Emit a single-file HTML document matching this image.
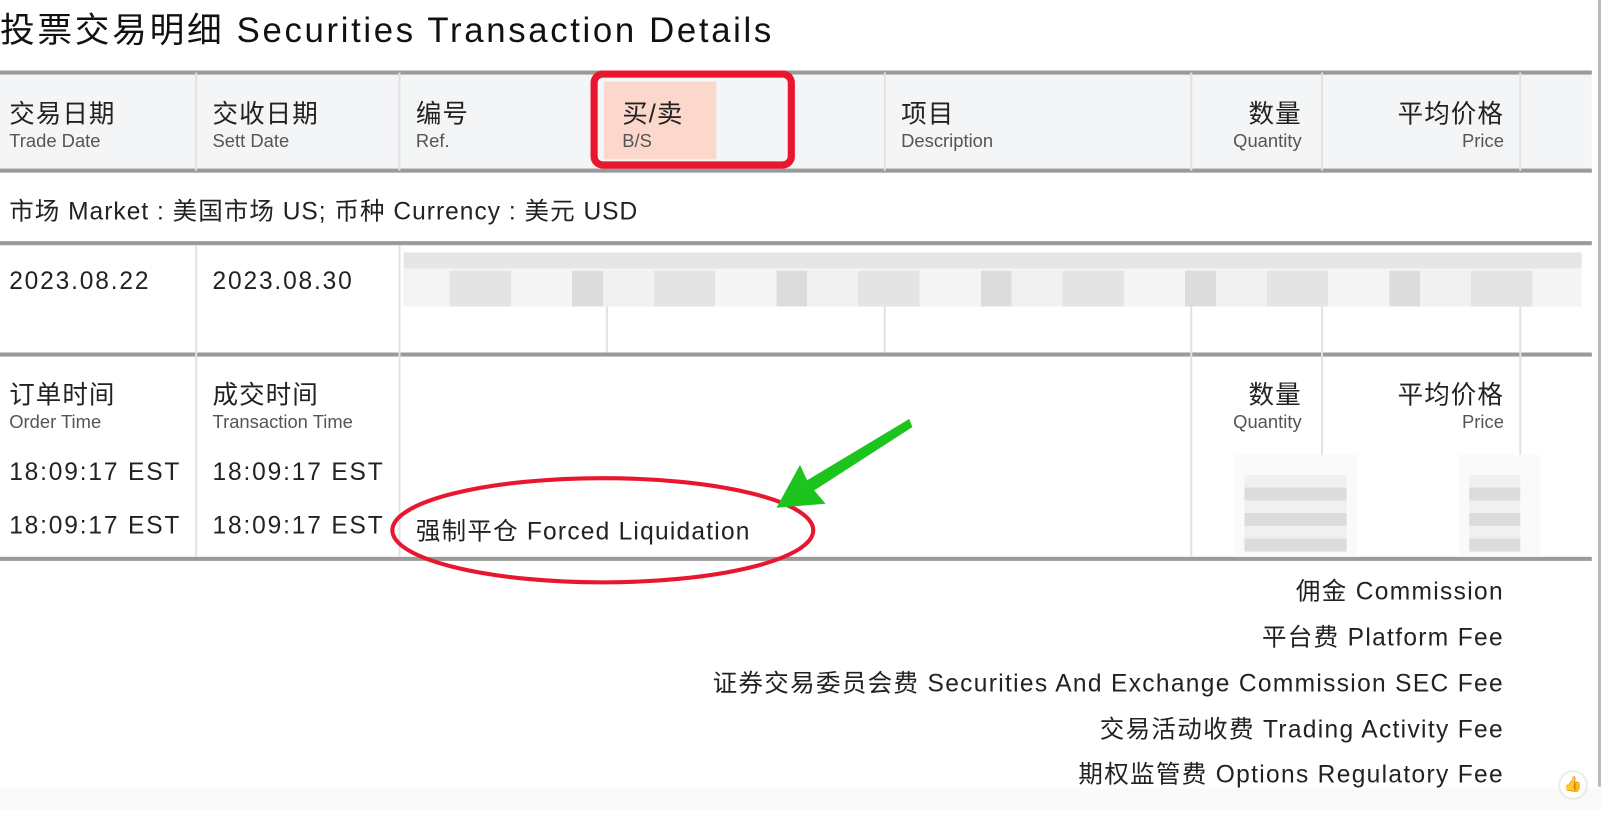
<!DOCTYPE html>
<html><head><meta charset="utf-8"><style>
body{margin:0;width:1602px;height:810px;background:#fff;position:relative;overflow:hidden;font-family:"Liberation Sans","Noto Sans CJK SC",sans-serif;color:#333}
#w{position:absolute;left:0;top:0;width:1568px;height:793px;transform:scale(1.0217);transform-origin:0 0}
.a{position:absolute;white-space:nowrap}
.h{position:absolute;height:4px;background:#9a9a9a}
.v{position:absolute;width:2px;background:#e2e2e2}
.cn{font-size:25px;color:#222;letter-spacing:1px}
.en{font-size:18px;color:#555}
.d{font-size:24px;color:#222;letter-spacing:1.8px}
.f{font-size:24px;color:#222;right:96px;text-align:right;letter-spacing:1.3px}
</style></head><body>
<div id="w">
<div class="a" style="left:0;top:2px;font-size:34px;color:#111;letter-spacing:2.6px">投票交易明细 Securities Transaction Details</div>
<div class="a" style="left:0;top:71px;width:1558px;height:96px;background:#f4f5f7"></div>
<div class="h" style="left:0;top:69px;width:1558px"></div>
<div class="h" style="left:0;top:165px;width:1558px"></div>
<div class="h" style="left:0;top:236px;width:1558px"></div>
<div class="h" style="left:0;top:345px;width:1558px"></div>
<div class="h" style="left:0;top:545px;width:1558px"></div>
<div class="v" style="left:191px;top:71px;height:96px"></div>
<div class="v" style="left:390px;top:71px;height:96px"></div>
<div class="v" style="left:865px;top:71px;height:96px"></div>
<div class="v" style="left:1165px;top:71px;height:96px"></div>
<div class="v" style="left:1293px;top:71px;height:96px"></div>
<div class="v" style="left:1487px;top:71px;height:96px"></div>
<div class="v" style="left:191px;top:240px;height:305px"></div>
<div class="v" style="left:390px;top:240px;height:305px"></div>
<div class="v" style="left:593px;top:300px;height:45px"></div>
<div class="v" style="left:865px;top:300px;height:45px"></div>
<div class="v" style="left:1165px;top:300px;height:245px"></div>
<div class="v" style="left:1293px;top:300px;height:245px"></div>
<div class="v" style="left:1487px;top:300px;height:245px"></div>
<div class="a" style="left:1564px;top:0;width:3px;height:770px;background:#bbb"></div>
<div class="a" style="left:591px;top:80px;width:110px;height:76px;background:#fbd8cb"></div>
<div class="a" style="left:578px;top:69px;width:186px;height:82px;border:7px solid #e8162e;border-radius:12px"></div>
<div class="a cn" style="left:9px;top:92px">交易日期</div><div class="a en" style="left:9px;top:128px">Trade Date</div>
<div class="a cn" style="left:208px;top:92px">交收日期</div><div class="a en" style="left:208px;top:128px">Sett Date</div>
<div class="a cn" style="left:407px;top:92px">编号</div><div class="a en" style="left:407px;top:128px">Ref.</div>
<div class="a cn" style="left:609px;top:92px">买/卖</div><div class="a en" style="left:609px;top:128px">B/S</div>
<div class="a cn" style="left:882px;top:92px">项目</div><div class="a en" style="left:882px;top:128px">Description</div>
<div class="a cn" style="right:294px;top:92px">数量</div><div class="a en" style="right:294px;top:128px">Quantity</div>
<div class="a cn" style="right:96px;top:92px">平均价格</div><div class="a en" style="right:96px;top:128px">Price</div>
<div class="a" style="left:9px;top:187px;font-size:24px;color:#222;letter-spacing:1px">市场 Market : 美国市场 US; 币种 Currency : 美元 USD</div>
<div class="a d" style="left:9px;top:262px">2023.08.22</div>
<div class="a d" style="left:208px;top:262px">2023.08.30</div>
<div class="a" style="left:395px;top:247px;width:1153px;height:53px;background:linear-gradient(#e6e6e6 0 30%,#f4f4f4 30%);"></div>
<div class="a" style="left:440px;top:265px;width:1100px;height:35px;background:repeating-linear-gradient(90deg,#ddd 0 60px,#f5f5f5 60px 120px,#d2d2d2 120px 150px,#f0f0f0 150px 200px);opacity:.7"></div>
<div class="a cn" style="left:9px;top:367px">订单时间</div><div class="a en" style="left:9px;top:403px">Order Time</div>
<div class="a cn" style="left:208px;top:367px">成交时间</div><div class="a en" style="left:208px;top:403px">Transaction Time</div>
<div class="a cn" style="right:294px;top:367px">数量</div><div class="a en" style="right:294px;top:403px">Quantity</div>
<div class="a cn" style="right:96px;top:367px">平均价格</div><div class="a en" style="right:96px;top:403px">Price</div>
<div class="a d" style="left:9px;top:449px">18:09:17 EST</div>
<div class="a d" style="left:208px;top:449px">18:09:17 EST</div>
<div class="a d" style="left:9px;top:501px">18:09:17 EST</div>
<div class="a d" style="left:208px;top:501px">18:09:17 EST</div>
<div class="a" style="left:1208px;top:445px;width:120px;height:100px;background:#fafafa"></div>
<div class="a" style="left:1218px;top:465px;width:100px;height:75px;background:repeating-linear-gradient(#f0f0f0 0 12px,#dcdcdc 12px 25px)"></div>
<div class="a" style="left:1428px;top:445px;width:80px;height:100px;background:#fafafa"></div>
<div class="a" style="left:1438px;top:465px;width:50px;height:75px;background:repeating-linear-gradient(#f0f0f0 0 12px,#dcdcdc 12px 25px)"></div>
<div class="a d" style="left:407px;top:500px;letter-spacing:1.2px">强制平仓 Forced Liquidation</div>
<svg class="a" style="left:0;top:0" width="1602" height="810">
<ellipse cx="590" cy="519" rx="206" ry="51" fill="none" stroke="#e8162e" stroke-width="4"/>
<path d="M890 410 L790 470 L783 455 L760 497 L808 493 L797 480 L893 418 Z" fill="#1ec41e"/>
</svg>
<div class="a f" style="top:559px">佣金 Commission</div>
<div class="a f" style="top:604px">平台费 Platform Fee</div>
<div class="a f" style="top:649px">证券交易委员会费 Securities And Exchange Commission SEC Fee</div>
<div class="a f" style="top:694px">交易活动收费 Trading Activity Fee</div>
<div class="a f" style="top:738px">期权监管费 Options Regulatory Fee</div>
</div>
<div class="a" style="left:0;top:788px;width:1602px;height:22px;background:#fafafa"></div>
<div class="a" style="left:1560px;top:772px;width:26px;height:26px;border-radius:50%;background:#fff;box-shadow:0 0 3px #bbb;font-size:15px;text-align:center;line-height:26px;color:#f0a020">👍</div>
</body></html>
